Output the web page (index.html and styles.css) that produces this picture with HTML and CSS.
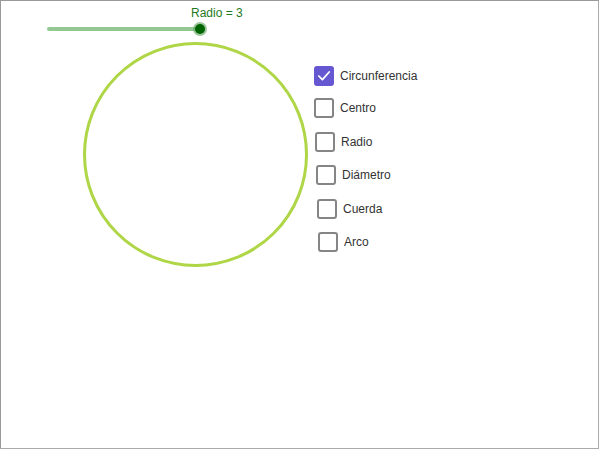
FILE: index.html
```html
<!DOCTYPE html>
<html lang="es">
<head>
  <meta charset="UTF-8">
  <meta name="viewport" content="width=device-width, initial-scale=1.0">
  <title>Circunferencia</title>
  <link rel="stylesheet" href="styles.css">
</head>
<body>
  <div class="applet">
    <!-- lienzo de la construcción -->
    <svg class="canvas" width="599" height="449" viewBox="0 0 599 449">
      <circle class="circle" cx="195.5" cy="154.5" r="111"></circle>
      <line class="track" x1="49" y1="29" x2="200" y2="29"></line>
      <circle class="knob-halo" cx="200" cy="29" r="7"></circle>
      <circle class="knob" cx="200" cy="29" r="5"></circle>
    </svg>
    <div class="slider-label">Radio = 3</div>

    <ul class="options">
      <li class="option">
        <span class="box checked">
          <svg viewBox="0 0 20 20" width="20" height="20"><path d="M3.5 10 L8 14.5 L16.5 5" fill="none" stroke="#fff" stroke-width="2.2" stroke-linecap="round" stroke-linejoin="round"></path></svg>
        </span>
        <span class="label">Circunferencia</span>
      </li>
      <li class="option"><span class="box"></span><span class="label">Centro</span></li>
      <li class="option"><span class="box"></span><span class="label">Radio</span></li>
      <li class="option"><span class="box"></span><span class="label">Diámetro</span></li>
      <li class="option"><span class="box"></span><span class="label">Cuerda</span></li>
      <li class="option"><span class="box"></span><span class="label">Arco</span></li>
    </ul>
  </div>
</body>
</html>
```

FILE: styles.css
```css
body {
  margin: 0;
  padding: 0;
  background: #fff;
  font-family: "Liberation Sans", Arial, sans-serif;
}
.applet {
  position: relative;
  width: 599px;
  height: 449px;
  box-sizing: border-box;
  border: 1px solid #999;
  border-right-color: #aaa;
  border-bottom-color: #aaa;
  overflow: hidden;
}
.canvas {
  position: absolute;
  left: -1px;
  top: -1px;
}
.circle {
  fill: none;
  stroke: #aed646;
  stroke-width: 3;
}
.track {
  stroke: #93c893;
  stroke-width: 4;
  stroke-linecap: round;
}
.knob-halo {
  fill: #5fa35f;
  opacity: 0.6;
}
.knob {
  fill: #006400;
}
.slider-label {
  position: absolute;
  left: 190px;
  top: 5px;
  font-size: 12px;
  color: #1f7a1f;
}
.options {
  position: absolute;
  left: 313px;
  top: 65px;
  margin: 0;
  padding: 0;
  list-style: none;
  display: flex;
  flex-direction: column;
}
.option {
  display: flex;
  align-items: center;
  height: 20px;
  margin-bottom: 13.4px;
  font-size: 12px;
  color: #333;
}
.option:nth-child(2) { margin-top: -1px; }
.option:nth-child(3) { margin-left: 1px; }
.option:nth-child(4) { margin-left: 2px; }
.option:nth-child(5) { margin-left: 3px; }
.option:nth-child(6) { margin-left: 4px; }
.box {
  width: 20px;
  height: 20px;
  box-sizing: border-box;
  border: 2px solid #858585;
  border-radius: 3px;
  display: flex;
  align-items: center;
  justify-content: center;
}
.box.checked {
  background: #6557d2;
  border-color: #6557d2;
}
.label {
  margin-left: 6px;
}
```
